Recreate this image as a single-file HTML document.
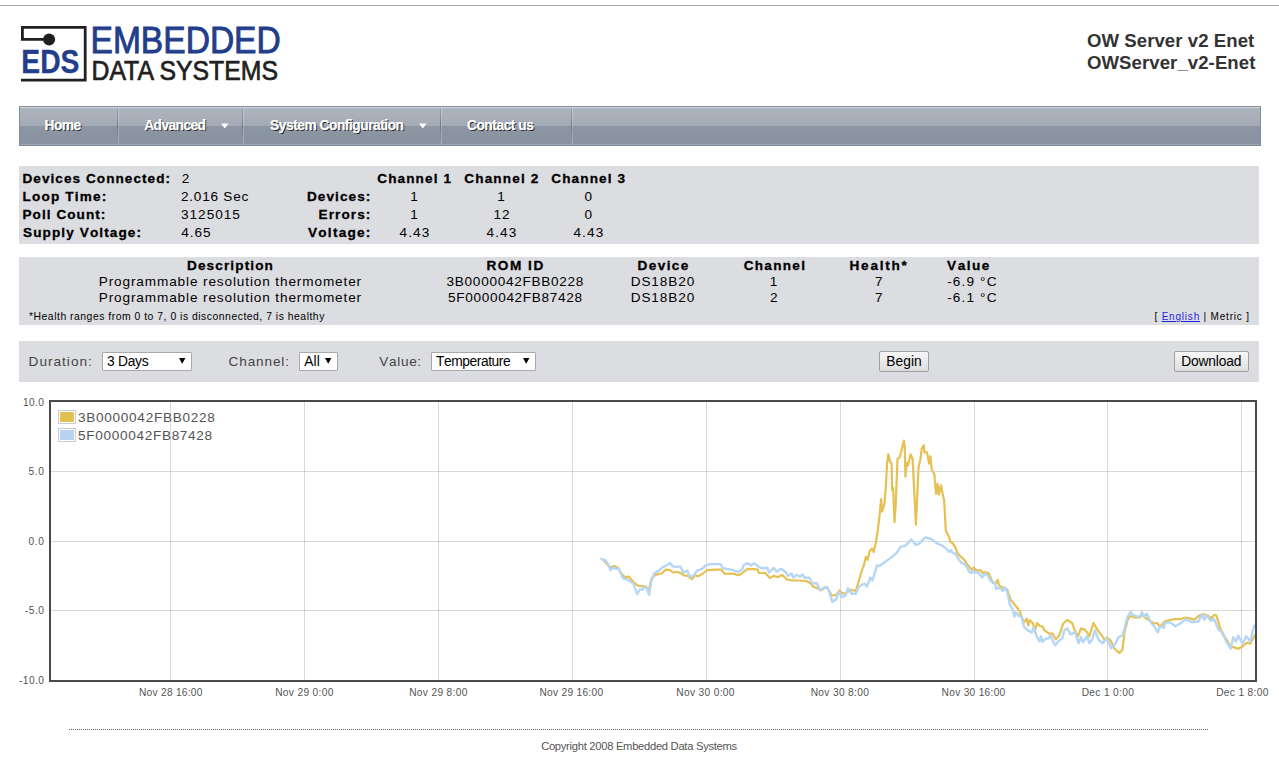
<!DOCTYPE html>
<html><head><meta charset="utf-8"><title>OW Server v2 Enet</title>
<style>
html,body{margin:0;padding:0;background:#fff;width:1279px;height:760px;overflow:hidden;position:relative;}
body{font-family:"Liberation Sans",sans-serif;}
.t{position:absolute;white-space:pre;line-height:20px;font-kerning:none;font-family:"Liberation Sans",sans-serif;}
</style></head><body>
<svg style="position:absolute;left:0;top:0" width="300" height="100" font-family="Liberation Sans, sans-serif">
<path d="M21 80.1H85.2V27.4H22.4V39.4H49" fill="none" stroke="#231f20" stroke-width="2.8" stroke-linejoin="miter"/>
<circle cx="49.1" cy="39.5" r="6" fill="#231f20"/>
<text x="21.36" y="72.75" font-size="32.99418604651163" font-weight="bold" fill="#223d8a" textLength="58.09" lengthAdjust="spacingAndGlyphs" stroke="#223d8a" stroke-width="0.3">EDS</text>
<text x="90.50" y="52.65" font-size="37.2093023255814"  fill="#223d8a" textLength="190.26" lengthAdjust="spacingAndGlyphs" stroke="#223d8a" stroke-width="0.9">EMBEDDED</text>
<text x="91.47" y="80.25" font-size="27.470930232558146"  fill="#231f20" textLength="186.49" lengthAdjust="spacingAndGlyphs" stroke="#231f20" stroke-width="0.7">DATA SYSTEMS</text>
</svg>
<div style="position:absolute;left:0px;top:5px;width:1279px;height:1px;background:#ababab"></div>
<div class="t" style="left:1086.94px;top:30.70px;font-size:18.6px;font-weight:bold;letter-spacing:0.060px;color:#333;">OW Server v2 Enet</div>
<div class="t" style="left:1086.94px;top:52.90px;font-size:18.6px;font-weight:bold;letter-spacing:0.068px;color:#333;">OWServer_v2-Enet</div>
<div style="position:absolute;left:19px;top:106px;width:1242px;height:40px;background:#838e9c"></div>
<div style="position:absolute;left:20px;top:107px;width:1240px;height:1px;background:#d3d8df"></div>
<div style="position:absolute;left:20px;top:108px;width:1240px;height:18px;background:linear-gradient(#aeb4be,#a3aab5)"></div>
<div style="position:absolute;left:20px;top:126px;width:1240px;height:18px;background:linear-gradient(#8c96a4,#89939f)"></div>
<div style="position:absolute;left:20px;top:144px;width:1240px;height:1px;background:#9aa3b0"></div>
<div style="position:absolute;left:117px;top:108px;width:1px;height:36px;background:linear-gradient(#9ba3af,#6f7a89 50%,#909aa7)"></div>
<div style="position:absolute;left:118px;top:108px;width:1px;height:36px;background:rgba(255,255,255,0.22)"></div>
<div style="position:absolute;left:242px;top:108px;width:1px;height:36px;background:linear-gradient(#9ba3af,#6f7a89 50%,#909aa7)"></div>
<div style="position:absolute;left:243px;top:108px;width:1px;height:36px;background:rgba(255,255,255,0.22)"></div>
<div style="position:absolute;left:440px;top:108px;width:1px;height:36px;background:linear-gradient(#9ba3af,#6f7a89 50%,#909aa7)"></div>
<div style="position:absolute;left:441px;top:108px;width:1px;height:36px;background:rgba(255,255,255,0.22)"></div>
<div style="position:absolute;left:571px;top:108px;width:1px;height:36px;background:linear-gradient(#9ba3af,#6f7a89 50%,#909aa7)"></div>
<div style="position:absolute;left:572px;top:108px;width:1px;height:36px;background:rgba(255,255,255,0.22)"></div>
<div class="t" style="left:44.58px;top:115.69px;font-size:13.8px;font-weight:bold;letter-spacing:-0.582px;color:#fff;text-shadow:1px 1px 0 #1a1a1a;-webkit-text-stroke:0.25px #fff;">Home</div>
<div class="t" style="left:144.26px;top:115.69px;font-size:13.8px;font-weight:bold;letter-spacing:-0.600px;color:#fff;text-shadow:1px 1px 0 #1a1a1a;-webkit-text-stroke:0.25px #fff;">Advanced</div>
<div class="t" style="left:270.10px;top:115.69px;font-size:13.8px;font-weight:bold;letter-spacing:-0.496px;color:#fff;text-shadow:1px 1px 0 #1a1a1a;-webkit-text-stroke:0.25px #fff;">System Configuration</div>
<div class="t" style="left:466.93px;top:115.69px;font-size:13.8px;font-weight:bold;letter-spacing:-0.475px;color:#fff;text-shadow:1px 1px 0 #1a1a1a;-webkit-text-stroke:0.25px #fff;">Contact us</div>
<svg style="position:absolute;left:220.8px;top:123px" width="8" height="6"><path d="M0 0.5H7.6L3.8 5.5Z" fill="#fff"/></svg>
<svg style="position:absolute;left:419.0px;top:123px" width="8" height="6"><path d="M0 0.5H7.6L3.8 5.5Z" fill="#fff"/></svg>
<div style="position:absolute;left:19px;top:166px;width:1240px;height:78px;background:#dcdde0"></div>
<div style="position:absolute;left:19px;top:257px;width:1240px;height:68px;background:#dcdde0"></div>
<div style="position:absolute;left:19px;top:341px;width:1240px;height:41px;background:#dcdde0"></div>
<div class="t" style="left:22.49px;top:168.96px;font-size:13.6px;font-weight:bold;-webkit-text-stroke:0.3px #000;letter-spacing:1.037px;">Devices Connected:</div>
<div class="t" style="left:22.49px;top:186.96px;font-size:13.6px;font-weight:bold;-webkit-text-stroke:0.3px #000;letter-spacing:1.171px;">Loop Time:</div>
<div class="t" style="left:22.49px;top:204.96px;font-size:13.6px;font-weight:bold;-webkit-text-stroke:0.3px #000;letter-spacing:1.040px;">Poll Count:</div>
<div class="t" style="left:23.01px;top:222.86px;font-size:13.6px;font-weight:bold;-webkit-text-stroke:0.3px #000;letter-spacing:1.095px;">Supply Voltage:</div>
<div class="t" style="left:181.72px;top:168.96px;font-size:13.6px;">2</div>
<div class="t" style="left:180.92px;top:186.96px;font-size:13.6px;letter-spacing:0.775px;">2.016 Sec</div>
<div class="t" style="left:181.08px;top:204.96px;font-size:13.6px;letter-spacing:0.957px;">3125015</div>
<div class="t" style="left:181.29px;top:222.86px;font-size:13.6px;letter-spacing:0.971px;">4.65</div>
<div class="t" style="left:377.24px;top:168.96px;font-size:13.6px;font-weight:bold;-webkit-text-stroke:0.3px #000;letter-spacing:1.093px;">Channel 1</div>
<div class="t" style="left:464.24px;top:168.96px;font-size:13.6px;font-weight:bold;-webkit-text-stroke:0.3px #000;letter-spacing:1.151px;">Channel 2</div>
<div class="t" style="left:551.24px;top:168.96px;font-size:13.6px;font-weight:bold;-webkit-text-stroke:0.3px #000;letter-spacing:1.107px;">Channel 3</div>
<div class="t" style="left:306.89px;top:186.96px;font-size:13.6px;font-weight:bold;-webkit-text-stroke:0.3px #000;letter-spacing:1.082px;">Devices:</div>
<div class="t" style="left:318.49px;top:204.96px;font-size:13.6px;font-weight:bold;-webkit-text-stroke:0.3px #000;letter-spacing:1.095px;">Errors:</div>
<div class="t" style="left:308.01px;top:222.86px;font-size:13.6px;font-weight:bold;-webkit-text-stroke:0.3px #000;letter-spacing:1.250px;">Voltage:</div>
<div class="t" style="left:410.33px;top:186.96px;font-size:13.6px;">1</div>
<div class="t" style="left:497.33px;top:186.96px;font-size:13.6px;">1</div>
<div class="t" style="left:584.42px;top:186.96px;font-size:13.6px;">0</div>
<div class="t" style="left:410.33px;top:204.96px;font-size:13.6px;">1</div>
<div class="t" style="left:493.56px;top:204.96px;font-size:13.6px;letter-spacing:1px;">12</div>
<div class="t" style="left:584.42px;top:204.96px;font-size:13.6px;">0</div>
<div class="t" style="left:399.49px;top:222.86px;font-size:13.6px;letter-spacing:1.147px;">4.43</div>
<div class="t" style="left:486.49px;top:222.86px;font-size:13.6px;letter-spacing:1.147px;">4.43</div>
<div class="t" style="left:573.39px;top:222.86px;font-size:13.6px;letter-spacing:1.147px;">4.43</div>
<div class="t" style="left:186.99px;top:255.86px;font-size:13.6px;font-weight:bold;-webkit-text-stroke:0.3px #000;letter-spacing:1.114px;">Description</div>
<div class="t" style="left:486.49px;top:255.86px;font-size:13.6px;font-weight:bold;-webkit-text-stroke:0.3px #000;letter-spacing:1.535px;">ROM ID</div>
<div class="t" style="left:637.49px;top:255.86px;font-size:13.6px;font-weight:bold;-webkit-text-stroke:0.3px #000;letter-spacing:1.404px;">Device</div>
<div class="t" style="left:743.64px;top:255.86px;font-size:13.6px;font-weight:bold;-webkit-text-stroke:0.3px #000;letter-spacing:1.279px;">Channel</div>
<div class="t" style="left:849.49px;top:255.86px;font-size:13.6px;font-weight:bold;-webkit-text-stroke:0.3px #000;letter-spacing:1.761px;">Health*</div>
<div class="t" style="left:947.11px;top:255.86px;font-size:13.6px;font-weight:bold;-webkit-text-stroke:0.3px #000;letter-spacing:1.468px;">Value</div>
<div class="t" style="left:98.78px;top:271.66px;font-size:13.6px;letter-spacing:0.872px;">Programmable resolution thermometer</div>
<div class="t" style="left:446.58px;top:271.66px;font-size:13.6px;letter-spacing:0.702px;">3B0000042FBB0228</div>
<div class="t" style="left:630.68px;top:271.66px;font-size:13.6px;letter-spacing:0.905px;">DS18B20</div>
<div class="t" style="left:769.83px;top:271.66px;font-size:13.6px;">1</div>
<div class="t" style="left:875.11px;top:271.66px;font-size:13.6px;">7</div>
<div class="t" style="left:947.20px;top:271.66px;font-size:13.6px;letter-spacing:1.141px;">-6.9 °C</div>
<div class="t" style="left:98.78px;top:287.66px;font-size:13.6px;letter-spacing:0.872px;">Programmable resolution thermometer</div>
<div class="t" style="left:448.06px;top:287.66px;font-size:13.6px;letter-spacing:0.668px;">5F0000042FB87428</div>
<div class="t" style="left:630.68px;top:287.66px;font-size:13.6px;letter-spacing:0.905px;">DS18B20</div>
<div class="t" style="left:770.02px;top:287.66px;font-size:13.6px;">2</div>
<div class="t" style="left:875.11px;top:287.66px;font-size:13.6px;">7</div>
<div class="t" style="left:947.20px;top:287.66px;font-size:13.6px;letter-spacing:1.141px;">-6.1 °C</div>
<div class="t" style="left:29.03px;top:307.11px;font-size:10.4px;letter-spacing:0.511px;">*Health ranges from 0 to 7, 0 is disconnected, 7 is healthy</div>
<div class="t" style="left:1154.49px;top:307.05px;font-size:10.0px;letter-spacing:0.797px;">[ <span style="color:#1d1de6;text-decoration:underline">English</span> | Metric ]</div>
<div class="t" style="left:28.58px;top:351.86px;font-size:13.6px;letter-spacing:1.009px;color:#444;">Duration:</div>
<div class="t" style="left:228.61px;top:351.86px;font-size:13.6px;letter-spacing:0.856px;color:#444;">Channel:</div>
<div class="t" style="left:379.34px;top:351.86px;font-size:13.6px;letter-spacing:0.648px;color:#444;">Value:</div>
<div style="position:absolute;left:102px;top:352px;width:90px;height:19px;background:#fff;border:1px solid #a9a9a9;box-sizing:border-box;border-radius:1px"></div>
<div class="t" style="left:106.97px;top:351.79px;font-size:13.8px;letter-spacing:-0.265px;">3 Days</div>
<svg style="position:absolute;left:178.7px;top:357px" width="7" height="8"><path d="M0 1H6.4L3.2 6.8Z" fill="#000"/></svg>
<div style="position:absolute;left:299px;top:352px;width:39px;height:19px;background:#fff;border:1px solid #a9a9a9;box-sizing:border-box;border-radius:1px"></div>
<div class="t" style="left:304.37px;top:351.79px;font-size:13.8px;">All</div>
<svg style="position:absolute;left:325.0px;top:357px" width="7" height="8"><path d="M0 1H6.4L3.2 6.8Z" fill="#000"/></svg>
<div style="position:absolute;left:431px;top:352px;width:105px;height:19px;background:#fff;border:1px solid #a9a9a9;box-sizing:border-box;border-radius:1px"></div>
<div class="t" style="left:435.99px;top:351.79px;font-size:13.8px;letter-spacing:-0.438px;">Temperature</div>
<svg style="position:absolute;left:522.9px;top:357px" width="7" height="8"><path d="M0 1H6.4L3.2 6.8Z" fill="#000"/></svg>
<div style="position:absolute;left:879px;top:351px;width:50px;height:21px;background:linear-gradient(#f7f7f7,#dedede);border:1px solid #a0a0a0;box-sizing:border-box;border-radius:2px"></div>
<div class="t" style="left:886.37px;top:351.99px;font-size:13.8px;letter-spacing:0.033px;">Begin</div>
<div style="position:absolute;left:1174px;top:351px;width:75px;height:21px;background:linear-gradient(#f7f7f7,#dedede);border:1px solid #a0a0a0;box-sizing:border-box;border-radius:2px"></div>
<div class="t" style="left:1181.17px;top:351.99px;font-size:13.8px;letter-spacing:-0.164px;">Download</div>
<svg style="position:absolute;left:0;top:0" width="1279" height="760">
<line x1="170.5" y1="402" x2="170.5" y2="680" stroke="rgba(0,0,0,0.15)" stroke-width="1"/>
<line x1="304.5" y1="402" x2="304.5" y2="680" stroke="rgba(0,0,0,0.15)" stroke-width="1"/>
<line x1="438.5" y1="402" x2="438.5" y2="680" stroke="rgba(0,0,0,0.15)" stroke-width="1"/>
<line x1="572.5" y1="402" x2="572.5" y2="680" stroke="rgba(0,0,0,0.15)" stroke-width="1"/>
<line x1="706.5" y1="402" x2="706.5" y2="680" stroke="rgba(0,0,0,0.15)" stroke-width="1"/>
<line x1="840.5" y1="402" x2="840.5" y2="680" stroke="rgba(0,0,0,0.15)" stroke-width="1"/>
<line x1="974.5" y1="402" x2="974.5" y2="680" stroke="rgba(0,0,0,0.15)" stroke-width="1"/>
<line x1="1107.5" y1="402" x2="1107.5" y2="680" stroke="rgba(0,0,0,0.15)" stroke-width="1"/>
<line x1="1241.5" y1="402" x2="1241.5" y2="680" stroke="rgba(0,0,0,0.15)" stroke-width="1"/>
<line x1="51" y1="471.5" x2="1255" y2="471.5" stroke="rgba(0,0,0,0.15)" stroke-width="1"/>
<line x1="51" y1="541.5" x2="1255" y2="541.5" stroke="rgba(0,0,0,0.15)" stroke-width="1"/>
<line x1="51" y1="610.5" x2="1255" y2="610.5" stroke="rgba(0,0,0,0.15)" stroke-width="1"/>
<clipPath id="pc"><rect x="51" y="402" width="1204" height="278"/></clipPath>
<g clip-path="url(#pc)" fill="none" stroke-linejoin="round" stroke-linecap="round">
<polyline points="601.6,558.9 604.4,560.8 607.2,564.5 611.0,567.4 613.8,566.0 617.5,567.4 621.3,573.5 625.0,577.2 628.8,576.7 632.5,581.0 635.3,583.8 639.1,586.1 642.8,586.1 646.1,586.6 648.5,591.3 650.3,583.8 651.8,578.1 655.0,575.3 658.8,573.9 661.6,573.5 665.4,569.7 670.0,570.2 672.9,572.5 676.6,572.0 679.4,572.5 684.1,575.3 687.9,575.8 691.6,579.1 695.4,575.3 698.2,576.3 702.9,573.5 706.6,570.2 715.6,569.7 721.3,569.7 725.0,573.9 730.6,573.5 734.4,573.9 738.1,575.3 741.9,573.5 747.5,568.8 754.1,569.2 757.8,569.7 758.8,573.0 765.3,573.0 770.0,578.1 773.8,575.8 777.5,577.2 782.2,574.9 786.9,579.5 792.6,580.5 798.2,580.5 806.6,581.0 811.3,583.8 813.2,586.6 816.9,588.0 821.6,590.3 825.0,587.1 828.4,589.4 831.7,595.5 836.2,595.0 839.5,590.5 842.9,593.8 846.3,592.7 850.7,589.9 855.8,591.0 858.6,581.5 861.9,570.3 864.1,564.7 865.8,556.9 867.5,559.7 869.7,551.3 872.0,548.5 873.7,551.9 875.9,542.4 877.8,530.0 879.7,514.2 881.1,499.1 882.1,511.6 884.3,504.3 885.7,489.2 887.0,464.2 888.3,454.3 890.3,462.2 891.6,463.6 892.2,490.5 893.2,487.9 894.5,522.1 895.8,503.7 897.5,458.9 899.5,457.6 901.4,451.1 903.8,440.5 904.7,445.8 905.4,476.7 906.7,462.9 908.0,465.5 910.7,454.3 912.6,458.9 915.9,524.7 918.6,466.8 920.5,458.9 921.8,448.4 923.8,445.1 924.5,452.4 927.1,452.4 929.1,463.6 930.4,456.3 931.7,469.5 934.3,474.1 936.1,493.8 937.6,483.9 938.9,494.5 940.9,485.3 944.2,501.1 945.8,530.6 949.2,537.3 950.3,541.8 952.5,542.9 955.3,547.4 958.1,554.1 960.4,556.3 963.7,559.1 967.1,564.1 971.5,569.7 973.8,567.5 976.0,570.3 980.5,570.3 982.7,573.1 985.0,572.0 988.3,573.1 990.6,577.5 992.8,583.1 996.1,583.1 997.8,579.8 998.9,585.4 1002.9,587.6 1007.3,589.8 1010.9,599.8 1013.9,603.8 1016.8,607.2 1019.8,611.7 1021.8,617.6 1023.8,622.5 1026.7,618.6 1028.2,625.5 1029.7,620.0 1033.1,623.5 1034.6,631.4 1037.1,623.0 1039.6,626.0 1042.5,626.5 1044.5,630.4 1049.4,633.9 1052.4,633.4 1055.8,639.3 1058.8,636.3 1060.3,632.4 1063.2,623.5 1067.2,620.0 1072.1,623.0 1075.1,631.4 1078.0,636.3 1081.0,628.4 1085.0,629.9 1087.9,633.4 1089.4,636.3 1093.4,623.0 1097.8,630.4 1101.7,635.3 1104.7,640.3 1106.7,637.3 1110.6,640.3 1113.6,647.2 1116.5,650.6 1119.5,653.1 1122.5,649.7 1124.4,632.8 1127.7,619.7 1130.4,615.9 1134.2,617.5 1139.7,617.5 1142.4,614.8 1146.3,618.6 1150.1,620.8 1153.9,623.5 1157.2,623.0 1159.4,626.3 1161.6,625.2 1164.9,621.3 1169.3,620.2 1174.7,619.2 1180.2,619.2 1185.7,617.5 1191.1,618.6 1194.4,619.7 1198.8,615.9 1203.2,614.2 1207.6,615.3 1211.9,618.1 1214.1,614.8 1216.3,615.3 1219.6,626.3 1222.9,635.0 1227.3,640.5 1230.6,647.1 1233.8,647.1 1238.2,648.7 1242.6,646.5 1247.0,642.7 1250.3,643.8 1255.2,635.0" stroke="#e6c052" stroke-width="2.2"/>
<polyline points="601.6,558.9 605.3,560.3 608.1,564.1 610.5,570.2 612.8,567.8 616.1,568.8 618.5,568.3 620.3,572.5 623.1,578.1 626.9,579.5 629.7,581.0 633.5,583.8 637.2,594.1 640.0,589.4 642.4,589.9 644.2,586.6 646.6,588.5 649.2,594.6 651.3,581.9 654.1,573.5 658.8,570.6 662.5,567.4 666.3,565.5 670.0,563.1 672.9,566.4 676.6,566.9 680.4,566.4 683.2,572.5 687.4,570.6 689.7,576.7 693.5,575.8 697.2,570.6 702.0,568.8 705.7,565.5 710.4,564.1 715.6,564.1 720.3,564.1 723.1,568.3 728.8,569.2 733.5,570.2 738.1,572.0 741.9,569.7 743.8,565.0 747.5,563.1 751.3,565.5 754.1,563.1 758.8,566.9 762.5,568.3 767.2,567.8 769.1,572.5 773.8,567.8 776.6,571.6 781.3,568.8 786.0,572.5 787.9,575.8 791.6,573.5 793.5,577.7 796.3,574.9 800.1,576.7 802.4,574.4 804.7,577.7 809.4,577.7 812.3,583.3 816.9,583.3 819.8,590.3 823.5,588.0 827.2,587.1 829.5,592.7 832.3,601.7 836.2,599.4 839.0,591.6 841.8,597.2 845.7,595.5 847.9,588.2 851.8,593.8 855.8,593.8 858.6,587.1 862.5,584.3 864.7,583.8 866.9,586.6 870.3,577.6 872.5,580.4 877.0,565.3 879.8,565.9 884.3,562.5 892.1,556.9 896.6,553.0 900.5,546.8 905.6,545.7 911.2,539.5 915.7,544.6 919.0,544.0 922.4,540.1 925.7,537.3 931.3,539.0 936.9,543.4 942.5,545.7 947.0,549.6 949.2,551.8 950.9,550.2 952.5,553.0 955.3,553.5 958.1,558.5 961.5,563.0 964.8,564.1 967.1,567.5 969.3,572.0 971.5,573.1 973.2,570.3 974.9,572.5 978.3,572.5 979.9,574.7 982.2,577.5 985.0,573.1 988.3,576.4 990.6,580.9 995.0,583.1 996.1,588.7 999.5,587.6 1002.9,591.0 1005.1,587.6 1007.3,592.1 1009.9,604.7 1012.9,609.7 1014.4,616.6 1015.9,612.6 1019.8,616.6 1021.8,616.6 1023.8,626.5 1027.7,630.4 1031.7,632.4 1033.6,627.4 1036.6,636.3 1039.6,641.3 1041.0,636.3 1042.5,641.8 1045.5,638.8 1048.4,638.3 1050.4,635.3 1053.4,642.3 1055.3,645.2 1058.3,641.3 1062.3,638.3 1064.2,630.4 1067.2,628.4 1070.6,634.4 1075.1,632.4 1078.5,643.2 1081.0,637.3 1083.0,642.3 1086.9,636.3 1089.4,643.2 1091.9,640.3 1094.8,630.4 1098.8,640.3 1102.7,643.2 1106.7,638.3 1111.1,648.2 1113.6,646.2 1115.6,643.2 1118.5,637.3 1122.5,635.3 1124.9,627.4 1127.1,617.5 1130.4,612.0 1133.1,614.8 1136.4,616.4 1140.2,616.4 1141.9,612.0 1144.1,616.4 1146.8,613.7 1150.6,621.9 1155.0,627.4 1157.8,632.3 1160.0,626.3 1163.8,627.9 1164.9,623.0 1170.4,622.4 1175.3,626.3 1180.2,623.5 1185.7,619.2 1192.2,622.4 1198.8,621.3 1201.5,614.8 1204.3,619.7 1206.5,615.3 1210.9,620.8 1214.1,619.2 1218.5,629.6 1222.9,632.8 1226.2,641.6 1230.6,648.7 1233.3,637.2 1236.0,641.6 1238.2,635.6 1242.6,643.8 1246.4,636.1 1250.3,641.6 1254.1,625.7" stroke="#b5d6f5" stroke-width="2.4"/>
</g>
<rect x="50" y="401" width="1206" height="280" fill="none" stroke="#4a4a4a" stroke-width="2"/>
<rect x="58.5" y="410.5" width="17" height="13" fill="#fff" stroke="#cccccc" stroke-width="1"/>
<rect x="60" y="412" width="14" height="10" fill="#e3c150"/>
<rect x="58.5" y="428.5" width="17" height="13" fill="#fff" stroke="#cccccc" stroke-width="1"/>
<rect x="60" y="430" width="14" height="10" fill="#b6d4f2"/>
</svg>
<div class="t" style="left:78.08px;top:407.86px;font-size:13.6px;letter-spacing:0.695px;color:#545454;">3B0000042FBB0228</div>
<div class="t" style="left:78.06px;top:425.86px;font-size:13.6px;letter-spacing:0.675px;color:#545454;">5F0000042FB87428</div>
<div class="t" style="left:23.12px;top:392.98px;font-size:10.2px;letter-spacing:0.308px;color:#545454;">10.0</div>
<div class="t" style="left:28.59px;top:462.28px;font-size:10.2px;letter-spacing:0.564px;color:#545454;">5.0</div>
<div class="t" style="left:28.60px;top:531.78px;font-size:10.2px;letter-spacing:0.559px;color:#545454;">0.0</div>
<div class="t" style="left:24.85px;top:600.98px;font-size:10.2px;letter-spacing:0.492px;color:#545454;">-5.0</div>
<div class="t" style="left:19.05px;top:670.98px;font-size:10.2px;letter-spacing:0.401px;color:#545454;">-10.0</div>
<div class="t" style="left:139.01px;top:682.78px;font-size:10.2px;letter-spacing:0.260px;color:#545454;">Nov 28 16:00</div>
<div class="t" style="left:275.16px;top:682.78px;font-size:10.2px;letter-spacing:0.323px;color:#545454;">Nov 29 0:00</div>
<div class="t" style="left:409.16px;top:682.78px;font-size:10.2px;letter-spacing:0.323px;color:#545454;">Nov 29 8:00</div>
<div class="t" style="left:539.41px;top:682.78px;font-size:10.2px;letter-spacing:0.278px;color:#545454;">Nov 29 16:00</div>
<div class="t" style="left:676.36px;top:682.78px;font-size:10.2px;letter-spacing:0.323px;color:#545454;">Nov 30 0:00</div>
<div class="t" style="left:810.66px;top:682.78px;font-size:10.2px;letter-spacing:0.323px;color:#545454;">Nov 30 8:00</div>
<div class="t" style="left:941.61px;top:682.78px;font-size:10.2px;letter-spacing:0.278px;color:#545454;">Nov 30 16:00</div>
<div class="t" style="left:1081.66px;top:682.78px;font-size:10.2px;letter-spacing:0.323px;color:#545454;">Dec 1 0:00</div>
<div class="t" style="left:1216.16px;top:682.78px;font-size:10.2px;letter-spacing:0.323px;color:#545454;">Dec 1 8:00</div>
<div style="position:absolute;left:69px;top:729px;width:1140px;height:1px;background:repeating-linear-gradient(90deg,#666 0 1px,transparent 1px 2px)"></div>
<div class="t" style="left:541.13px;top:736.05px;font-size:11.2px;letter-spacing:-0.280px;color:#555;">Copyright 2008 Embedded Data Systems</div>
</body></html>
